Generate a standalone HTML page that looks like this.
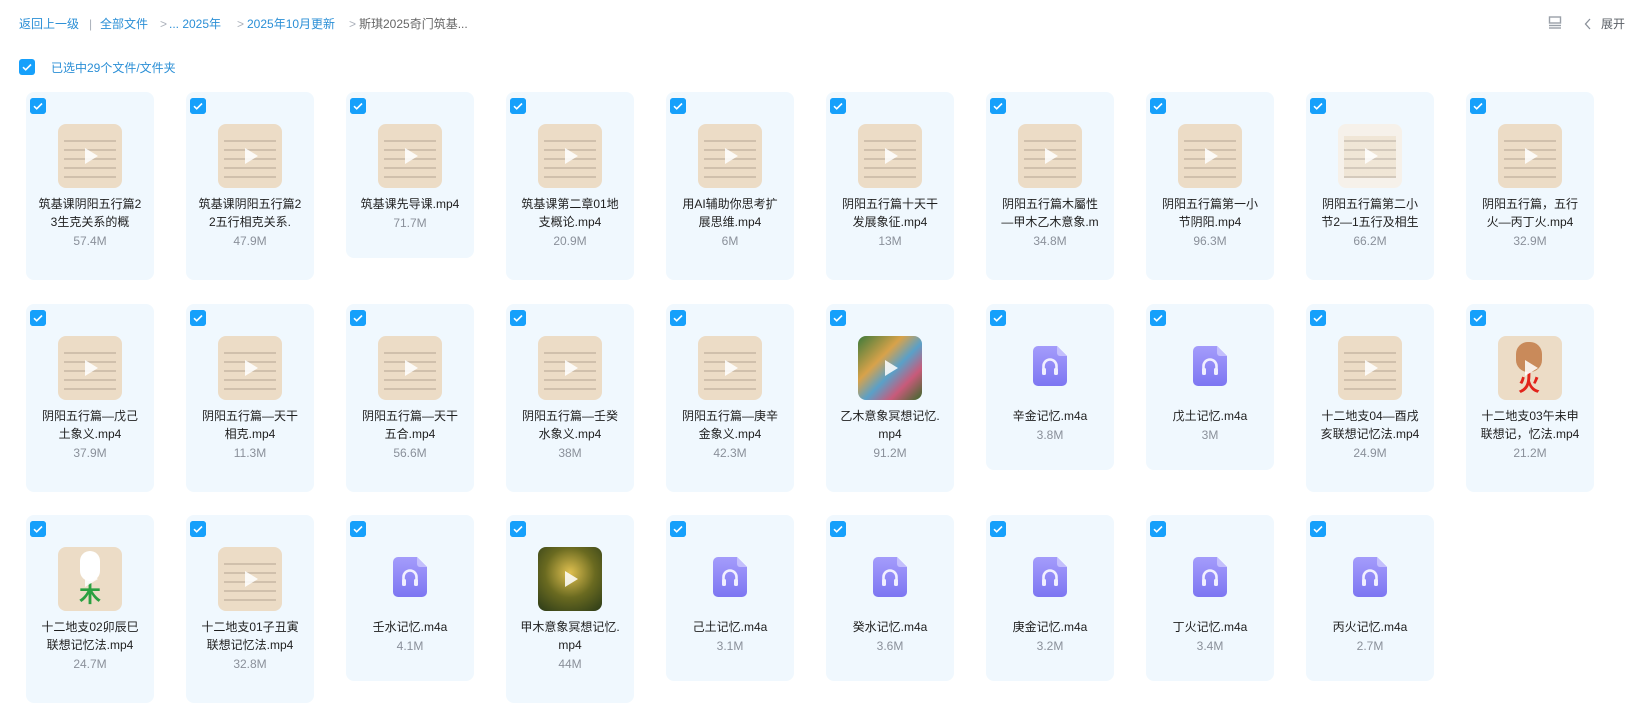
<!DOCTYPE html>
<html><head><meta charset="utf-8">
<style>
*{margin:0;padding:0;box-sizing:border-box}
body{width:1645px;height:724px;background:#fff;font-family:"Liberation Sans","Noto Sans CJK SC",sans-serif;position:relative;overflow:hidden}
.bc{position:absolute;top:16px;left:19px;font-size:12px;line-height:16px;color:#2b8fd6;white-space:nowrap}
.bc span{position:absolute;top:0}
.g{color:#aab0ba}
.sel{position:absolute;left:19px;top:59px;width:16px;height:16px;}
.seltxt{position:absolute;left:51px;top:60px;font-size:12px;line-height:16px;color:#2b8fd6}
.cb{width:16px;height:16px;border-radius:3px;background:#16a0fb;display:block}
.card{position:absolute;width:128px;height:188px;background:#f0f8fe;border-radius:8px;text-align:center}
.card.s{height:166px}
.card .cb{position:absolute;left:4px;top:6px}
.th{position:absolute;left:32px;top:32px;width:64px;height:64px;border-radius:8px;overflow:hidden;background:#ecdcc6}
.th .ln{position:absolute;left:6px;right:6px;top:12px;bottom:10px;background:repeating-linear-gradient(#ecdcc6 0 4px,#b9a996 4px 6px,#ecdcc6 6px 9px);opacity:.55}
.th .pl{position:absolute;left:27px;top:24px;width:0;height:0;border-left:13px solid rgba(255,255,255,.85);border-top:8px solid transparent;border-bottom:8px solid transparent}
.au{position:absolute;left:47px;top:42px}
.t{position:absolute;left:0;right:0;top:103px;font-size:12px;line-height:18px;color:#1e1e1e;white-space:nowrap;overflow:hidden}
.z{font-size:12px;line-height:20px;color:#8a909a}
.tr{position:absolute;top:16px;font-size:12px;line-height:16px;color:#5a5f66}
</style></head><body>
<div class="bc">
<span style="left:0">返回上一级</span>
<span class="g" style="left:70px">|</span>
<span style="left:81px">全部文件</span>
<span class="g" style="left:141px">&gt;</span>
<span style="left:150px">... 2025年</span>
<span class="g" style="left:218px">&gt;</span>
<span style="left:228px">2025年10月更新</span>
<span class="g" style="left:330px">&gt;</span>
<span style="left:340px;color:#666">斯琪2025奇门筑基...</span>
</div>
<svg style="position:absolute;left:1548px;top:16px" width="14" height="13" viewBox="0 0 14 13"><rect x="1.5" y="1" width="11" height="6" fill="none" stroke="#9aa0a8" stroke-width="1.4"/><line x1="1" y1="9.5" x2="13" y2="9.5" stroke="#9aa0a8" stroke-width="1.4"/><line x1="1" y1="12" x2="13" y2="12" stroke="#9aa0a8" stroke-width="1.4"/></svg>
<svg style="position:absolute;left:1584px;top:18px" width="8" height="12" viewBox="0 0 8 12"><path d="M6 1L1.5 6L6 11" fill="none" stroke="#8a9099" stroke-width="1.3"/></svg>
<div class="tr" style="left:1601px">展开</div>

<svg class="sel" viewBox="0 0 16 16"><rect width="16" height="16" rx="3" fill="#16a0fb"/><path d="M4 8.2l2.7 2.6L12 5.5" fill="none" stroke="#fff" stroke-width="1.6"/></svg>
<div class="seltxt">已选中29个文件/文件夹</div>

<div id="g"></div>
<script>
var ck='<svg class="cb" viewBox="0 0 16 16"><rect width="16" height="16" rx="3" fill="#16a0fb"/><path d="M4 8.2l2.7 2.6L12 5.5" fill="none" stroke="#fff" stroke-width="1.6"/></svg>';
var au='<svg class="au" width="34" height="40" viewBox="0 0 34 40"><defs><linearGradient id="pg" x1="0" y1="0" x2="0" y2="1"><stop offset="0" stop-color="#a49cfb"/><stop offset="1" stop-color="#7d76f2"/></linearGradient></defs><path d="M5 0H24L34 10V35A5 5 0 0 1 29 40H5A5 5 0 0 1 0 35V5A5 5 0 0 1 5 0Z" fill="url(#pg)"/><path d="M24 0V7A3 3 0 0 0 27 10H34Z" fill="#c4bffd"/><path d="M10.5 25V20A6.5 6.5 0 0 1 23.5 20V25" fill="none" stroke="#f1efff" stroke-width="2.6"/><rect x="9" y="22" width="4" height="7" rx="1.5" fill="#f1efff"/><rect x="21" y="22" width="4" height="7" rx="1.5" fill="#f1efff"/></svg>';
var bgs={g:'linear-gradient(135deg,#3e7a3a,#d8a24a 35%,#5aa0c8 55%,#c85a7a 75%,#3a6a2a)',j:'radial-gradient(circle at 50% 40%,#e0c050,#6a6a20 50%,#2a3a18)',w:'#f6f1ea'};
var d=[
["筑基课阴阳五行篇2<br>3生克关系的概","57.4M"],["筑基课阴阳五行篇2<br>2五行相克关系.","47.9M"],["筑基课先导课.mp4","71.7M",1],["筑基课第二章01地<br>支概论.mp4","20.9M"],["用AI辅助你思考扩<br>展思维.mp4","6M"],["阴阳五行篇十天干<br>发展象征.mp4","13M"],["阴阳五行篇木屬性<br>—甲木乙木意象.m","34.8M"],["阴阳五行篇第一小<br>节阴阳.mp4","96.3M"],["阴阳五行篇第二小<br>节2—1五行及相生","66.2M",0,'w'],["阴阳五行篇，五行<br>火—丙丁火.mp4","32.9M"],
["阴阳五行篇—戊己<br>土象义.mp4","37.9M"],["阴阳五行篇—天干<br>相克.mp4","11.3M"],["阴阳五行篇—天干<br>五合.mp4","56.6M"],["阴阳五行篇—壬癸<br>水象义.mp4","38M"],["阴阳五行篇—庚辛<br>金象义.mp4","42.3M"],["乙木意象冥想记忆.<br>mp4","91.2M",0,'g'],["辛金记忆.m4a","3.8M",2],["戊土记忆.m4a","3M",2],["十二地支04—酉戌<br>亥联想记忆法.mp4","24.9M"],["十二地支03午未申<br>联想记，忆法.mp4","21.2M",0,'h'],
["十二地支02卯辰巳<br>联想记忆法.mp4","24.7M",0,'r'],["十二地支01子丑寅<br>联想记忆法.mp4","32.8M"],["壬水记忆.m4a","4.1M",2],["甲木意象冥想记忆.<br>mp4","44M",0,'j'],["己土记忆.m4a","3.1M",2],["癸水记忆.m4a","3.6M",2],["庚金记忆.m4a","3.2M",2],["丁火记忆.m4a","3.4M",2],["丙火记忆.m4a","2.7M",2]];
var tops=[92,304,515],h='';
d.forEach(function(c,i){var r=Math.floor(i/10),col=i%10;var short=c[2];
var th;
if(short==2){th=au;}else{
var bg=c[3]&&bgs[c[3]]?bgs[c[3]]:'#ecdcc6';var extra='';
if(c[3]=='h')extra='<div style="position:absolute;left:18px;top:6px;width:26px;height:30px;border-radius:12px;background:#c98a5a"></div><div style="position:absolute;left:20px;top:36px;font-size:22px;line-height:24px;color:#e2231a;font-weight:bold">火</div>';
if(c[3]=='r')extra='<div style="position:absolute;left:22px;top:4px;width:20px;height:30px;border-radius:10px;background:#fff"></div><div style="position:absolute;left:21px;top:36px;font-size:22px;line-height:24px;color:#2aa040;font-weight:bold">木</div>';
var ln=(c[3]=='g'||c[3]=='j'||c[3]=='h'||c[3]=='r')?'':'<div class="ln"></div>';
th='<div class="th" style="background:'+bg+'">'+ln+extra+'<div class="pl"></div></div>';}
h+='<div class="card'+(short?' s':'')+'" style="left:'+(26+160*col)+'px;top:'+tops[r]+'px">'+ck+th+'<div class="t">'+c[0]+'<div class="z">'+c[1]+'</div></div></div>';});
document.getElementById('g').innerHTML=h;
</script>
</body></html>
